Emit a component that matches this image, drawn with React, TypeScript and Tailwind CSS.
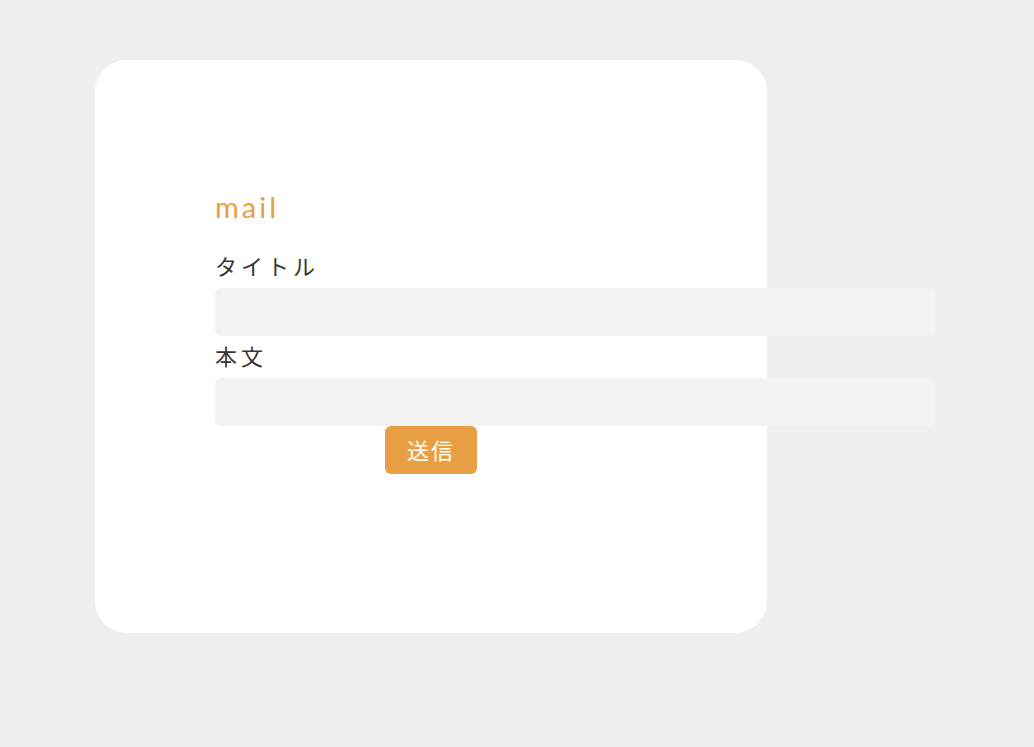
const inputCls = "block w-[720px] h-[48px] rounded-[6px] bg-[#f3f3f3] px-3 outline-none";
const labelCls = "block h-[42px] leading-[42px] text-[22px] tracking-[4px] text-[#3a3631]";

export default function App() {
    return (
    <div className="min-h-[747px] w-full bg-[#efefef] pt-[60px] pl-[95px]" style={{ fontFamily: 'Lato, "Noto Sans CJK JP", sans-serif' }}>
        <div className="w-[672px] h-[573px] rounded-[32px] bg-white pl-[120px] pt-[128px]">
            <h1 className="h-[40px] leading-[40px] text-[29px] tracking-[3px] text-[#e8a043] mb-[19px] -mt-[1px]" style={{ fontFamily: 'Lato, sans-serif' }}>mail</h1>
            <form className="flex flex-col">
                <label className={labelCls}>タイトル</label>
                <input className={inputCls} type="text" />
                <label className={labelCls}>本文</label>
                <input className={inputCls} type="text" />
                <button type="button" className="ml-[170px] w-[92px] h-[48px] rounded-[6px] bg-[#e89f43] text-white text-[22px] tracking-[2px]">送信</button>
            </form>
        </div>
    </div>
    )
}
